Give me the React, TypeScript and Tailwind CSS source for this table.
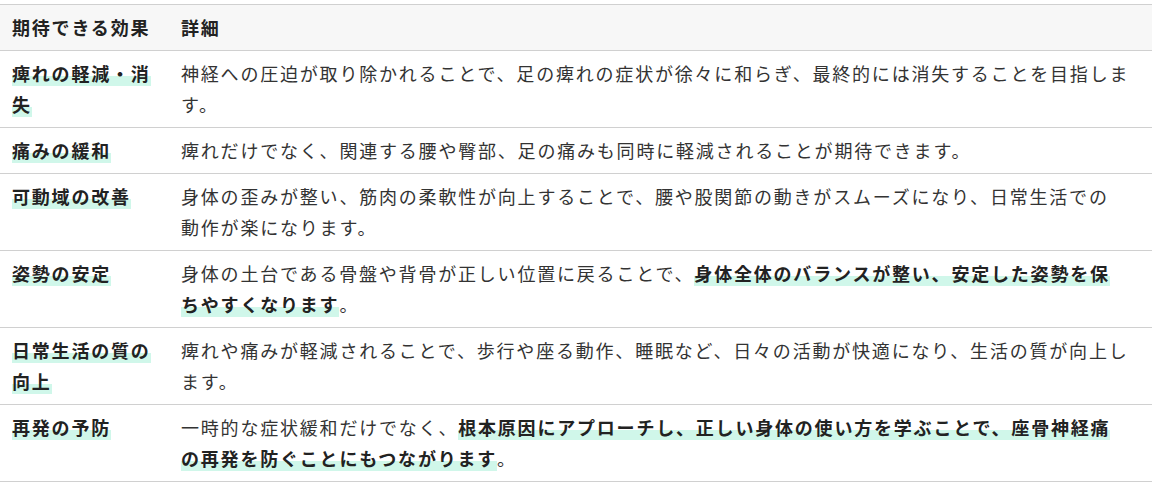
const rows: { label: string; detail: React.ReactNode }[] = [
  {
    label: "痺れの軽減・消失",
    detail:
      "神経への圧迫が取り除かれることで、足の痺れの症状が徐々に和らぎ、最終的には消失することを目指します。",
  },
  {
    label: "痛みの緩和",
    detail: "痺れだけでなく、関連する腰や臀部、足の痛みも同時に軽減されることが期待できます。",
  },
  {
    label: "可動域の改善",
    detail: (
      <>
        身体の歪みが整い、筋肉の柔軟性が向上することで、腰や股関節の動きがスムーズになり、日常生活での
        <br />
        動作が楽になります。
      </>
    ),
  },
  {
    label: "姿勢の安定",
    detail: (
      <>
        身体の土台である骨盤や背骨が正しい位置に戻ることで、
        <Marker>
          身体全体のバランスが整い、安定した姿勢を保
          <br />
          ちやすくなります
        </Marker>
        。
      </>
    ),
  },
  {
    label: "日常生活の質の向上",
    detail:
      "痺れや痛みが軽減されることで、歩行や座る動作、睡眠など、日々の活動が快適になり、生活の質が向上します。",
  },
  {
    label: "再発の予防",
    detail: (
      <>
        一時的な症状緩和だけでなく、
        <Marker>
          根本原因にアプローチし、正しい身体の使い方を学ぶことで、座骨神経痛
          <br />
          の再発を防ぐことにもつながります
        </Marker>
        。
      </>
    ),
  },
];

function Marker({ children }: { children: React.ReactNode }) {
  return (
    <strong className="font-bold text-[#222] bg-[linear-gradient(transparent_60%,#d0f7ea_60%)]">
      {children}
    </strong>
  );
}

export default function App() {
  return (
    <div
      className="pt-1 w-[1152px] bg-white text-[#333] text-[18px] leading-[31px] tracking-[1.8px]"
      style={{ fontFamily: '"Noto Sans CJK JP", "Noto Sans", sans-serif' }}
    >
      <table className="w-full table-fixed border-collapse">
        <colgroup>
          <col className="w-[169px]" />
          <col />
        </colgroup>
        <thead>
          <tr className="bg-[#f7f7f7] border-y border-[#d0d0d0]">
            <th className="px-3 py-[7px] text-left font-bold text-[#222]">期待できる効果</th>
            <th className="px-3 py-[7px] text-left font-bold text-[#222]">詳細</th>
          </tr>
        </thead>
        <tbody>
          {rows.map((r) => (
            <tr key={r.label} className="border-b border-[#d0d0d0] align-top">
              <td className="px-3 py-[7px]">
                <Marker>{r.label}</Marker>
              </td>
              <td className="px-3 py-[7px]">{r.detail}</td>
            </tr>
          ))}
        </tbody>
      </table>
    </div>
  );
}
